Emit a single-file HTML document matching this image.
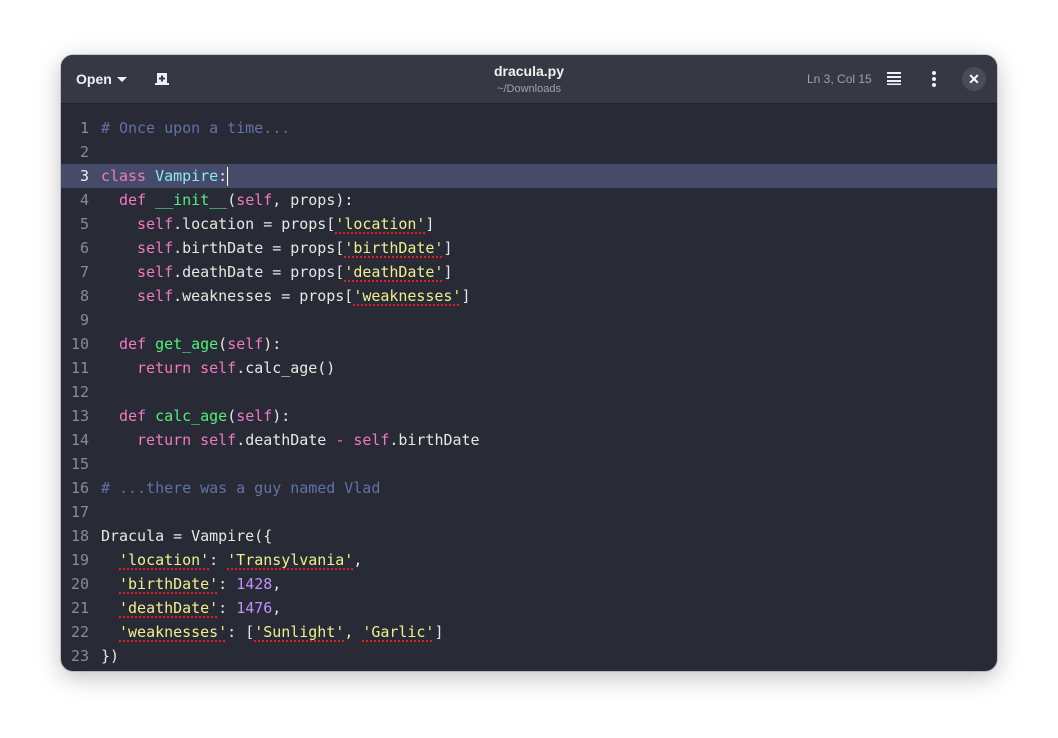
<!DOCTYPE html>
<html><head><meta charset="utf-8"><style>
*{margin:0;padding:0;box-sizing:border-box}
body{width:1058px;height:738px;background:#fff;position:relative;overflow:hidden;font-family:"Liberation Sans",sans-serif}
.win{position:absolute;left:61px;top:55px;width:936px;height:616px;border-radius:12px;background:#282a36;overflow:hidden;box-shadow:0 6px 24px rgba(0,0,0,.25),0 0 0 1px rgba(0,0,0,.15)}
.hdr{position:absolute;left:0;top:0;width:936px;height:49px;background:#363844;border-bottom:1px solid #1f2029}
.hdr .open{position:absolute;left:15px;top:16px;color:#f0f0f0;font-weight:bold;font-size:14px}
.tri{position:absolute;left:56px;top:22px;width:0;height:0;border-left:5px solid transparent;border-right:5px solid transparent;border-top:5px solid #f0f0f0}
.title{position:absolute;left:0;width:936px;text-align:center;top:8px;color:#f0f0f0;font-weight:bold;font-size:14px}
.sub{position:absolute;left:0;width:936px;text-align:center;top:28px;color:#a0a2aa;font-size:11px}
.pos{position:absolute;left:746px;top:17px;color:#a0a2aa;font-size:12px}
.close{position:absolute;left:901px;top:12px;width:24px;height:24px;border-radius:50%;background:#4a4c57;color:#fff;font-size:14px;font-weight:bold;text-align:center;line-height:24px}
.code{position:absolute;left:0;top:61px;width:936px;font-family:"DejaVu Sans Mono","Liberation Mono",monospace;font-size:15px;color:#e8e8e2;letter-spacing:-0.02px}
.l{height:24px;line-height:24px;white-space:pre;position:relative}
.l.cur{background:#454b68}
.n{display:inline-block;width:28px;text-align:right;color:#8a8c94;margin-right:12px}
.cur .n{color:#f0f0f0}
.k{color:#f07ac0}.c{color:#6272a4}.f{color:#50f07b}.s{color:#eef08c;text-decoration:underline dotted #e02020;text-decoration-thickness:2px;text-underline-offset:3px}.p{color:#bd93f9}.t{color:#8be9fd}
.caret{display:inline-block;width:1px;height:19px;background:#fff;vertical-align:middle}
</style></head><body>
<div class="win">
 <div class="hdr">
  <div class="open">Open</div><div class="tri"></div>
  <svg style="position:absolute;left:93px;top:17px" width="16" height="14" viewBox="0 0 16 14"><path d="M3 1h10v10h2v2H1v-2h2z" fill="#f0f0f0"/><path d="M7 3.5h2v2h2v2H9v2H7v-2H5v-2h2z" fill="#363844"/></svg>
  <div class="title">dracula.py</div>
  <div class="sub">~/Downloads</div>
  <div class="pos">Ln 3, Col 15</div>
  <svg style="position:absolute;left:826px;top:17px" width="14" height="13"><g fill="#f0f0f0"><rect y="0" width="14" height="2"/><rect y="4" width="14" height="2"/><rect y="8" width="14" height="2"/><rect y="11.5" width="14" height="1.5"/></g></svg>
  <svg style="position:absolute;left:870px;top:15px" width="6" height="18"><g fill="#f0f0f0"><circle cx="3" cy="3" r="2"/><circle cx="3" cy="9" r="2"/><circle cx="3" cy="15" r="2"/></g></svg>
  <div class="close">✕</div>
 </div>
 <div class="code">
<div class="l"><span class="n">1</span><span class="c"># Once upon a time...</span></div>
<div class="l"><span class="n">2</span></div>
<div class="l cur"><span class="n">3</span><span class="k">class</span> <span class="t">Vampire</span>:<span class="caret"></span></div>
<div class="l"><span class="n">4</span>  <span class="k">def</span> <span class="f">__init__</span>(<span class="k">self</span>, props):</div>
<div class="l"><span class="n">5</span>    <span class="k">self</span>.location = props[<span class="s">'location'</span>]</div>
<div class="l"><span class="n">6</span>    <span class="k">self</span>.birthDate = props[<span class="s">'birthDate'</span>]</div>
<div class="l"><span class="n">7</span>    <span class="k">self</span>.deathDate = props[<span class="s">'deathDate'</span>]</div>
<div class="l"><span class="n">8</span>    <span class="k">self</span>.weaknesses = props[<span class="s">'weaknesses'</span>]</div>
<div class="l"><span class="n">9</span></div>
<div class="l"><span class="n">10</span>  <span class="k">def</span> <span class="f">get_age</span>(<span class="k">self</span>):</div>
<div class="l"><span class="n">11</span>    <span class="k">return</span> <span class="k">self</span>.calc_age()</div>
<div class="l"><span class="n">12</span></div>
<div class="l"><span class="n">13</span>  <span class="k">def</span> <span class="f">calc_age</span>(<span class="k">self</span>):</div>
<div class="l"><span class="n">14</span>    <span class="k">return</span> <span class="k">self</span>.deathDate <span class="k">-</span> <span class="k">self</span>.birthDate</div>
<div class="l"><span class="n">15</span></div>
<div class="l"><span class="n">16</span><span class="c"># ...there was a guy named Vlad</span></div>
<div class="l"><span class="n">17</span></div>
<div class="l"><span class="n">18</span>Dracula = Vampire({</div>
<div class="l"><span class="n">19</span>  <span class="s">'location'</span>: <span class="s">'Transylvania'</span>,</div>
<div class="l"><span class="n">20</span>  <span class="s">'birthDate'</span>: <span class="p">1428</span>,</div>
<div class="l"><span class="n">21</span>  <span class="s">'deathDate'</span>: <span class="p">1476</span>,</div>
<div class="l"><span class="n">22</span>  <span class="s">'weaknesses'</span>: [<span class="s">'Sunlight'</span>, <span class="s">'Garlic'</span>]</div>
<div class="l"><span class="n">23</span>})</div>
 </div>
</div>
</body></html>
